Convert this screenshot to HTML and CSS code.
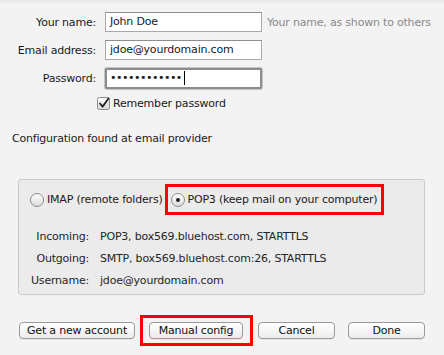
FILE: index.html
```html
<!DOCTYPE html>
<html>
<head>
<meta charset="utf-8">
<link rel="stylesheet" href="styles.css">
</head>
<body>
<div class="page">
  <div class="form">
    <div class="row">
      <label class="lbl">Your name:</label>
      <div class="field">John Doe</div>
      <span class="hint">Your name, as shown to others</span>
    </div>
    <div class="row">
      <label class="lbl">Email address:</label>
      <div class="field">jdoe@yourdomain.com</div>
    </div>
    <div class="row">
      <label class="lbl">Password:</label>
      <div class="field focus"><span class="dots">••••••••••••</span><span class="caret"></span></div>
    </div>
    <div class="row check-row">
      <span class="lbl"></span>
      <svg class="check" width="13" height="13" viewBox="0 0 13 13">
        <defs><linearGradient id="cg" x1="0" y1="0" x2="0" y2="1"><stop offset="0" stop-color="#fdfdfd"/><stop offset="1" stop-color="#d9d9d9"/></linearGradient></defs>
        <rect x="0.5" y="0.5" width="12" height="12" rx="2" fill="url(#cg)" stroke="#8a8a8a"/>
        <path d="M3 6.5 L5.6 9.6 L11.5 1.5" fill="none" stroke="#222" stroke-width="1.8" stroke-linecap="round" stroke-linejoin="round"/>
      </svg>
      <span class="check-text">Remember password</span>
    </div>
  </div>

  <p class="found">Configuration found at email provider</p>

  <div class="box">
    <div class="radios">
      <div class="radio-item">
        <span class="radio"></span>
        <span>IMAP (remote folders)</span>
      </div>
      <div class="radio-item selected">
        <span class="radio on"></span>
        <span>POP3 (keep mail on your computer)</span>
      </div>
    </div>
    <div class="info">
      <span class="ilbl">Incoming:</span><span class="ival">POP3, box569.bluehost.com, STARTTLS</span>
      <span class="ilbl">Outgoing:</span><span class="ival">SMTP, box569.bluehost.com:26, STARTTLS</span>
      <span class="ilbl">Username:</span><span class="ival">jdoe@yourdomain.com</span>
    </div>
  </div>

  <div class="buttons">
    <button class="btn b-new">Get a new account</button>
    <span class="hl"><button class="btn b-manual">Manual config</button></span>
    <button class="btn b-cancel">Cancel</button>
    <button class="btn b-done">Done</button>
  </div>
</div>
</body>
</html>
```

FILE: styles.css
```css
html, body {
  margin: 0;
  padding: 0;
}
body {
  width: 444px;
  height: 355px;
  overflow: hidden;
  background: linear-gradient(#e6e6e6 0, #f3f3f3 4px, #f3f3f3 100%);
  font-family: "DejaVu Sans", "Liberation Sans", sans-serif;
  font-size: 11px;
  letter-spacing: -0.2px;
  color: #1a1a1a;
}
.page {
  padding-top: 12px;
}
.form {
  display: flex;
  flex-direction: column;
  gap: 8px;
}
.row {
  display: flex;
  align-items: center;
  height: 20px;
}
.lbl {
  width: 96px;
  text-align: right;
  flex: none;
  margin-right: 9px;
}
.field {
  box-sizing: border-box;
  width: 157px;
  height: 20px;
  border: 1px solid #a8a8a8;
  border-top-color: #8e8e8e;
  background: #fff;
  padding: 0 4px;
  line-height: 18px;
  display: flex;
  align-items: center;
}
.field.focus {
  border: 2px solid #8c8c8c;
  border-radius: 2px;
  box-shadow: 0 0 0 1px #c4c4c4;
  height: 21px;
  padding: 0 3px;
}
.dots {
  letter-spacing: -0.5px;
  font-size: 11px;
}
.caret {
  display: inline-block;
  width: 1px;
  height: 14px;
  background: #000;
  margin-left: 2px;
}
.hint {
  color: #8a8a8a;
  margin-left: 5px;
}
.check-row {
  height: 14px;
  margin-top: 0;
}
.check-row .lbl {
  margin-right: 1px;
}
.check {
  flex: none;
}
.check-text {
  margin-left: 3px;
}
.found {
  margin: 22px 0 0 12px;
}
.box {
  margin: 34px 0 0 18px;
  width: 407px;
  height: 116px;
  box-sizing: border-box;
  background: #ebebeb;
  border: 1px solid #c9c9c9;
  border-radius: 3px;
  padding-top: 4px;
}
.radios {
  display: flex;
  align-items: center;
  padding-left: 11px;
}
.radio-item {
  display: flex;
  align-items: center;
  gap: 3px;
  height: 24px;
}
.radio-item.selected {
  box-sizing: border-box;
  height: 31px;
  border: 3px solid #f00;
  padding: 0 4px 0 3px;
  margin-left: 2px;
}
.radio {
  box-sizing: border-box;
  width: 14px;
  height: 14px;
  border-radius: 50%;
  border: 1px solid #8d8d8d;
  background: linear-gradient(#fefefe, #dcdcdc);
  position: relative;
}
.radio.on::after {
  content: "";
  position: absolute;
  left: 4px;
  top: 4px;
  width: 4px;
  height: 4px;
  border-radius: 50%;
  background: #222;
}
.info {
  display: grid;
  grid-template-columns: 70px auto;
  column-gap: 11px;
  row-gap: 8px;
  margin-top: 15px;
  line-height: 14px;
  color: #262626;
}
.ilbl {
  text-align: right;
}
.buttons {
  display: flex;
  align-items: center;
  margin: 20px 0 0 19px;
}
.btn {
  font-family: inherit;
  font-size: 11px;
  letter-spacing: -0.2px;
  color: #111;
  height: 17px;
  padding: 0;
  border: 1px solid #9a9a9a;
  border-radius: 4px;
  background: linear-gradient(#ffffff, #ececec);
  box-shadow: 0 1px 0 rgba(0,0,0,0.06);
  line-height: 15px;
}
.b-new { width: 116px; }
.hl {
  box-sizing: border-box;
  display: flex;
  align-items: center;
  height: 31px;
  border: 3px solid #f00;
  padding: 0 7px 0 6px;
  margin-left: 5px;
}
.b-manual { width: 94px; }
.b-cancel { width: 77px; margin-left: 5px; }
.b-done { width: 77px; margin-left: 13px; }
```
